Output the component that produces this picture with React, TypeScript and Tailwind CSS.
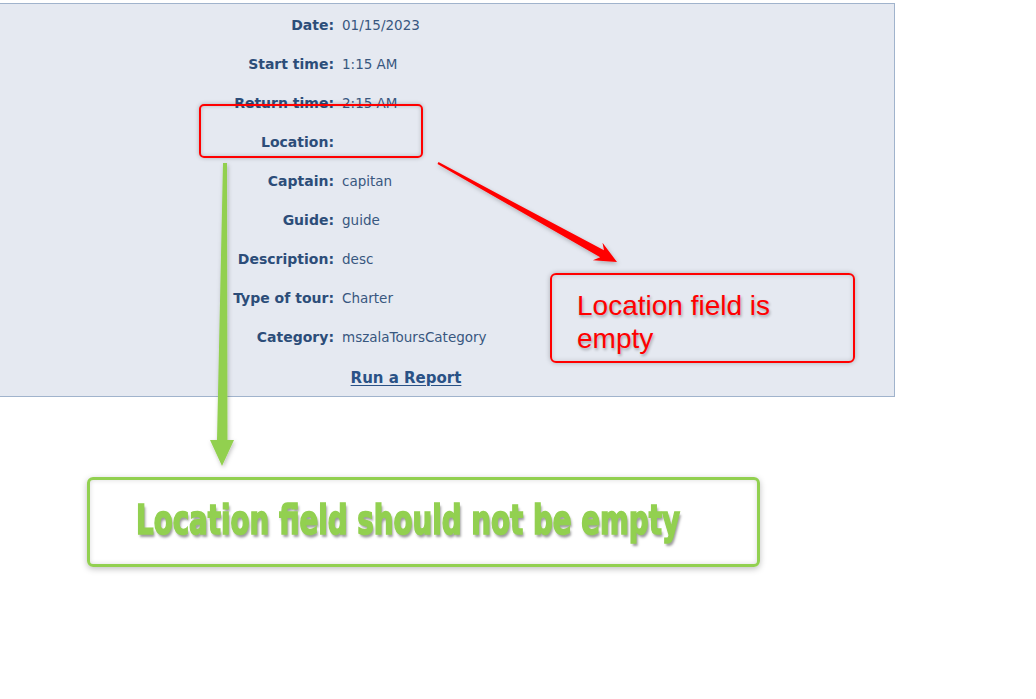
import React from "react";

const rows: [string, string][] = [
  ["Date:", "01/15/2023"],
  ["Start time:", "1:15 AM"],
  ["Return time:", "2:15 AM"],
  ["Location:", ""],
  ["Captain:", "capitan"],
  ["Guide:", "guide"],
  ["Description:", "desc"],
  ["Type of tour:", "Charter"],
  ["Category:", "mszalaToursCategory"],
];

export default function App() {
  return (
    <div className="relative w-[1036px] h-[699px] bg-white overflow-hidden [font-family:'DejaVu_Sans',Verdana,sans-serif]">
      <div className="mt-[3px] w-[895px] h-[394px] overflow-hidden bg-[#e5e9f1] border border-l-0 border-[#a0b3cc] pt-[2px] flex flex-col">
        {rows.map(([label, value]) => (
          <div key={label} className="flex shrink-0 items-center h-[39px]">
            <div className="w-[334px] text-right font-bold text-[14px] text-[#2c4d79]">{label}</div>
            <div className="ml-[8px] text-[13.5px] text-[#38577f]">{value}</div>
          </div>
        ))}
        <div className="flex shrink-0 justify-center mt-[4px] h-[35px] items-center">
          <span className="ml-[-82px] text-[15px] font-bold underline underline-offset-2 text-[#2a5286]">
            Run a Report
          </span>
        </div>
      </div>

      {/* Annotation: red highlight around Location row */}
      <div className="absolute left-[199px] top-[104px] w-[224px] h-[54px] rounded-[5px] border-2 border-[#ff0000] shadow-[0_0_4px_rgba(0,0,0,0.25),inset_0_0_4px_rgba(0,0,0,0.2)]" />

      {/* Arrows */}
      <svg className="absolute left-0 top-0 pointer-events-none" width="1036" height="699" viewBox="0 0 1036 699">
        <defs>
          <filter id="sh" x="-20%" y="-20%" width="140%" height="140%">
            <feDropShadow dx="1" dy="2" stdDeviation="2" floodColor="#000" floodOpacity="0.25" />
          </filter>
        </defs>
        <polygon
          filter="url(#sh)"
          fill="#ff0000"
          points="438.5,162.1 604,250.3 602.5,242.7 617,262 592.9,260.2 600.2,257.3 437.5,163.9"
        />
        <polygon
          filter="url(#sh)"
          fill="#92d050"
          points="223,163 227,163 227.5,440 234,440 222,466 210,440 217,440"
        />
      </svg>

      {/* Red callout */}
      <div className="absolute left-[550px] top-[273px] w-[305px] h-[90px] rounded-[6px] border-2 border-[#ff0000] shadow-[0_0_5px_rgba(0,0,0,0.25),inset_0_0_5px_rgba(0,0,0,0.15)] pl-[25px] pt-[14px]">
        <div className="[font-family:'Liberation_Sans',Arial,sans-serif] text-[28px] leading-[33px] text-[#ff0000] [text-shadow:1px_2px_3px_rgba(0,0,0,0.3)]">
          Location field is
          <br />
          empty
        </div>
      </div>

      {/* Green callout */}
      <div className="absolute left-[87px] top-[477px] w-[673px] h-[90px] rounded-[6px] border-[3px] border-[#92d050] shadow-[0_2px_6px_rgba(0,0,0,0.25),inset_0_0_5px_rgba(0,0,0,0.15)] pl-[46px] pt-[18px]">
        <span className="inline-block origin-left scale-x-[0.77] whitespace-nowrap [font-family:'DejaVu_Sans_Condensed','DejaVu_Sans',sans-serif] font-bold text-[40px] leading-[44px] text-[#92d050] [-webkit-text-stroke:1.5px_#92d050] [text-shadow:2px_3px_3px_rgba(0,0,0,0.4)]">
          Location field should not be empty
        </span>
      </div>
    </div>
  );
}
